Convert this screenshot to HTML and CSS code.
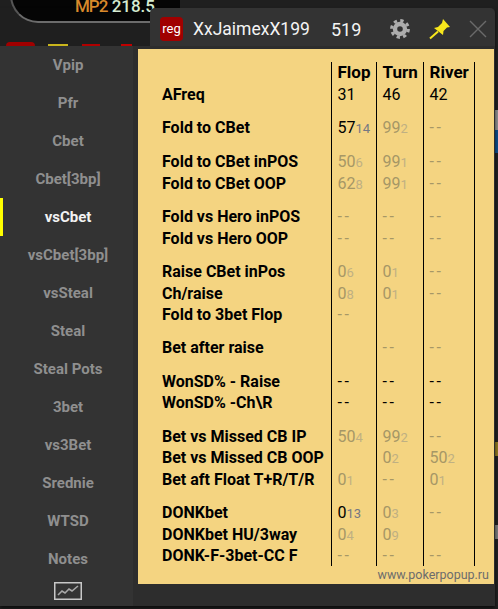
FILE: index.html

```html
<!DOCTYPE html>
<html lang="en">
<head>
    <meta charset="UTF-8">
    <meta name="viewport" content="width=device-width, initial-scale=1.0">
    <title>HUD popup</title>
    <link rel="stylesheet" href="styles.css">
</head>
<body>
    <!-- poker table showing behind the popup -->
    <div class="table-bg">
        <div class="seat-box"><span class="seat-pos">MP2</span> <span class="seat-stack">218.5</span></div>
        <div class="bg-red"></div>
        <div class="bg-yellow"></div>
        <div class="bg-red2"></div>
        <div class="bg-red3"></div>
        <div class="edge-blue"></div>
        <div class="edge-gray"></div>
        <div class="edge-gold"></div>
        <div class="edge-silver"></div>
    </div>

    <div class="popup">
        <div class="popup-header">
            <span class="badge">reg</span>
            <span class="player-name">XxJaimexX199</span>
            <span class="hand-count">519</span>
            <svg class="icon gear" width="20" height="20" viewBox="0 0 20 20">
                <circle cx="10" cy="10" r="5" fill="none" stroke="#adadad" stroke-width="4.4"/>
                <circle cx="10" cy="10" r="8.4" fill="none" stroke="#adadad" stroke-width="3" stroke-dasharray="3.3 3.3"/>
            </svg>
            <svg class="icon pin" width="22" height="22" viewBox="0 0 22 22">
                <path d="M14 1 L21 9 L18 9.5 L14.5 13 L14 17 L5 10 L9 9 L13 5 Z" fill="#f8e71c"/>
                <path d="M9 13.5 L1 20.5" stroke="#f8e71c" stroke-width="2"/>
            </svg>
            <svg class="icon close" width="18" height="18" viewBox="0 0 18 18">
                <path d="M1 1 L17 17 M17 1 L1 17" stroke="#6a6a6a" stroke-width="1.4"/>
            </svg>
        </div>

        <div class="popup-body">
            <div class="sidebar">
                <div class="tab">Vpip</div>
                <div class="tab">Pfr</div>
                <div class="tab">Cbet</div>
                <div class="tab">Cbet[3bp]</div>
                <div class="tab active">vsCbet</div>
                <div class="tab">vsCbet[3bp]</div>
                <div class="tab">vsSteal</div>
                <div class="tab">Steal</div>
                <div class="tab">Steal Pots</div>
                <div class="tab">3bet</div>
                <div class="tab">vs3Bet</div>
                <div class="tab">Srednie</div>
                <div class="tab">WTSD</div>
                <div class="tab">Notes</div>
                <div class="chart-btn">
                    <svg width="28" height="18" viewBox="0 0 28 18">
                        <rect x="0.75" y="0.75" width="26.5" height="16.5" fill="none" stroke="#c8c8c8" stroke-width="1.5"/>
                        <path d="M4 13 L8 9 L11 11 L15 7 L18 9 L24 4" fill="none" stroke="#a8a8a8" stroke-width="1.6"/>
                    </svg>
                </div>
            </div>

            <div class="content">
                <div class="stats">
                    <table class="stats-table">
                        <tr class="head">
                            <th></th><th>Flop</th><th>Turn</th><th>River</th><th></th>
                        </tr>
                        <tr>
                            <td>AFreq</td><td class="num">31</td><td class="num">46</td><td class="num">42</td><td></td>
                        </tr>
                        <tr class="group">
                            <td>Fold to CBet</td><td class="num">57<span class="cnt">14</span></td><td class="num low">99<span class="cnt">2</span></td><td class="num low dash">--</td><td></td>
                        </tr>
                        <tr class="group">
                            <td>Fold to CBet inPOS</td><td class="num low">50<span class="cnt">6</span></td><td class="num low">99<span class="cnt">1</span></td><td class="num low dash">--</td><td></td>
                        </tr>
                        <tr>
                            <td>Fold to CBet OOP</td><td class="num low">62<span class="cnt">8</span></td><td class="num low">99<span class="cnt">1</span></td><td class="num low dash">--</td><td></td>
                        </tr>
                        <tr class="group">
                            <td>Fold vs Hero inPOS</td><td class="num low dash">--</td><td class="num low dash">--</td><td class="num low dash">--</td><td></td>
                        </tr>
                        <tr>
                            <td>Fold vs Hero OOP</td><td class="num low dash">--</td><td class="num low dash">--</td><td class="num low dash">--</td><td></td>
                        </tr>
                        <tr class="group">
                            <td>Raise CBet inPos</td><td class="num low">0<span class="cnt">6</span></td><td class="num low">0<span class="cnt">1</span></td><td class="num low dash">--</td><td></td>
                        </tr>
                        <tr>
                            <td>Ch/raise</td><td class="num low">0<span class="cnt">8</span></td><td class="num low">0<span class="cnt">1</span></td><td class="num low dash">--</td><td></td>
                        </tr>
                        <tr>
                            <td>Fold to 3bet Flop</td><td class="num low dash">--</td><td></td><td></td><td></td>
                        </tr>
                        <tr class="group">
                            <td>Bet after raise</td><td></td><td class="num low dash">--</td><td class="num low dash">--</td><td></td>
                        </tr>
                        <tr class="group">
                            <td>WonSD% - Raise</td><td class="num dash">--</td><td class="num dash">--</td><td class="num dash">--</td><td></td>
                        </tr>
                        <tr>
                            <td>WonSD% -Ch\R</td><td class="num dash">--</td><td class="num dash">--</td><td class="num dash">--</td><td></td>
                        </tr>
                        <tr class="group">
                            <td>Bet vs Missed CB IP</td><td class="num low">50<span class="cnt">4</span></td><td class="num low">99<span class="cnt">2</span></td><td class="num low dash">--</td><td></td>
                        </tr>
                        <tr>
                            <td>Bet vs Missed CB OOP</td><td></td><td class="num low">0<span class="cnt">2</span></td><td class="num low">50<span class="cnt">2</span></td><td></td>
                        </tr>
                        <tr>
                            <td>Bet aft Float T+R/T/R</td><td class="num low">0<span class="cnt">1</span></td><td class="num low dash">--</td><td class="num low">0<span class="cnt">1</span></td><td></td>
                        </tr>
                        <tr class="group">
                            <td>DONKbet</td><td class="num">0<span class="cnt">13</span></td><td class="num low">0<span class="cnt">3</span></td><td class="num low dash">--</td><td></td>
                        </tr>
                        <tr>
                            <td>DONKbet HU/3way</td><td class="num low">0<span class="cnt">4</span></td><td class="num low">0<span class="cnt">9</span></td><td></td><td></td>
                        </tr>
                        <tr>
                            <td>DONK-F-3bet-CC F</td><td class="num low dash">--</td><td class="num low dash">--</td><td class="num low dash">--</td><td></td>
                        </tr>
                    </table>
                    <div class="site">www.pokerpopup.ru</div>
                </div>
            </div>
        </div>
    </div>
</body>
</html>
```

FILE: styles.css

```css
* {
    margin: 0;
    padding: 0;
    box-sizing: border-box;
}

body {
    font-family: Roboto, 'Liberation Sans', sans-serif;
    background: #1f1f1f;
    width: 498px;
    height: 609px;
    overflow: hidden;
    position: relative;
}

/* background table */
.table-bg {
    position: absolute;
    inset: 0;
    overflow: hidden;
}

.seat-box {
    position: absolute;
    left: 10px;
    top: -30px;
    width: 170px;
    height: 53px;
    background: #050505;
    border-bottom: 2px solid #6b6b6b;
    border-left: 2px solid #555;
    border-radius: 0 0 0 28px;
    padding-left: 63px;
    padding-top: 30px;
    font-size: 17px;
    font-weight: 500;
    line-height: 13px;
    white-space: nowrap;
}

.seat-pos {
    color: #d98a2b;
    letter-spacing: -1px;
}

.seat-stack {
    color: #d6ecd2;
}

.bg-red {
    position: absolute;
    left: 6px;
    top: 42px;
    width: 29px;
    height: 6px;
    background: #a00000;
    border-radius: 4px 4px 0 0;
}

.bg-yellow {
    position: absolute;
    left: 48px;
    top: 44px;
    width: 20px;
    height: 4px;
    background: #c9b51c;
}

.bg-red2 {
    position: absolute;
    left: 82px;
    top: 44px;
    width: 18px;
    height: 4px;
    background: #b00000;
}

.bg-red3 {
    position: absolute;
    left: 121px;
    top: 44px;
    width: 11px;
    height: 4px;
    background: #c00000;
}

.edge-blue {
    position: absolute;
    left: 494px;
    top: 130px;
    width: 4px;
    height: 23px;
    background: #0c4a86;
}

.edge-gray {
    position: absolute;
    left: 494px;
    top: 110px;
    width: 4px;
    height: 20px;
    background: #8a8a8a;
}

.edge-gold {
    position: absolute;
    left: 494px;
    top: 442px;
    width: 4px;
    height: 14px;
    background: #8a7420;
}

.edge-silver {
    position: absolute;
    left: 494px;
    top: 525px;
    width: 4px;
    height: 14px;
    background: #777;
}

/* popup window */
.popup {
    position: absolute;
    left: 0;
    top: 8px;
    width: 495px;
    box-shadow: 0 2px 3px rgba(0,0,0,0.6);
}

.popup-header {
    margin-left: 150px;
    height: 38px;
    background: #333;
    border-radius: 5px 5px 0 0;
    display: flex;
    align-items: center;
    padding-left: 10px;
    padding-top: 4px;
    color: #f4f4f4;
}

.badge {
    width: 23px;
    height: 24px;
    background: #a00000;
    border-radius: 4px;
    font-size: 13px;
    line-height: 23px;
    text-align: center;
    color: #fff;
}

.player-name {
    margin-left: 10px;
    font-size: 17.5px;
    width: 138px;
}

.hand-count {
    font-size: 18px;
    width: 59px;
}

.icon {
    display: block;
    flex: none;
}

.pin {
    margin-left: 19px;
}

.close {
    margin-left: 18px;
}

.popup-body {
    display: flex;
    height: 560px;
    background: #2d2d2d;
}

.sidebar {
    width: 133px;
    background: #333;
}

.tab {
    height: 38px;
    line-height: 38px;
    padding-left: 3px;
    text-align: center;
    font-size: 15px;
    font-weight: 700;
    color: #8f8f8f;
}

.tab.active {
    color: #f2f2f2;
    border-left: 3px solid #ffff00;
    padding-left: 0;
}

.chart-btn {
    display: flex;
    justify-content: center;
    padding-left: 3px;
    padding-top: 4px;
}

.content {
    flex: 1;
    padding-left: 5px;
}

.stats {
    margin-top: 3px;
    width: 356px;
    height: 535px;
    background: #f4d481;
    padding-top: 13px;
}

.stats-table {
    border-collapse: collapse;
    table-layout: fixed;
    width: 356px;
    color: #000;
}

.stats-table th,
.stats-table td {
    height: 21.45px;
    padding: 0;
    text-align: left;
    font-size: 16px;
    white-space: nowrap;
}

.stats-table th:first-child,
.stats-table td:first-child {
    width: 193px;
    padding-left: 24px;
    font-weight: 700;
}

.stats-table th:nth-child(2),
.stats-table td:nth-child(2) {
    width: 45px;
}

.stats-table th:nth-child(3),
.stats-table td:nth-child(3) {
    width: 47px;
}

.stats-table th:nth-child(4),
.stats-table td:nth-child(4) {
    width: 51px;
}

.stats-table th:nth-child(n+2):nth-child(-n+4),
.stats-table td:nth-child(n+2):nth-child(-n+4) {
    border-left: 1.5px solid #000;
    padding-left: 6px;
}

.stats-table th:last-child,
.stats-table td:last-child {
    border-left: 1.5px solid #000;
}

.stats-table th {
    font-weight: 700;
    font-size: 17px;
    padding-bottom: 2px;
}

.stats-table tr.group td {
    height: 33.5px;
    padding-top: 11.5px;
}

.num {
    font-weight: 400;
}

.dash {
    letter-spacing: 2.5px;
    font-variant-ligatures: none;
}

.cnt {
    font-size: 13px;
    color: #757883;
}

.num.low {
    color: #a69766;
}

.num.low .cnt {
    color: #bfb083;
}

.site {
    text-align: right;
    padding-right: 5px;
    font-size: 12.5px;
    line-height: 17px;
    color: #6c6c6c;
}
```
